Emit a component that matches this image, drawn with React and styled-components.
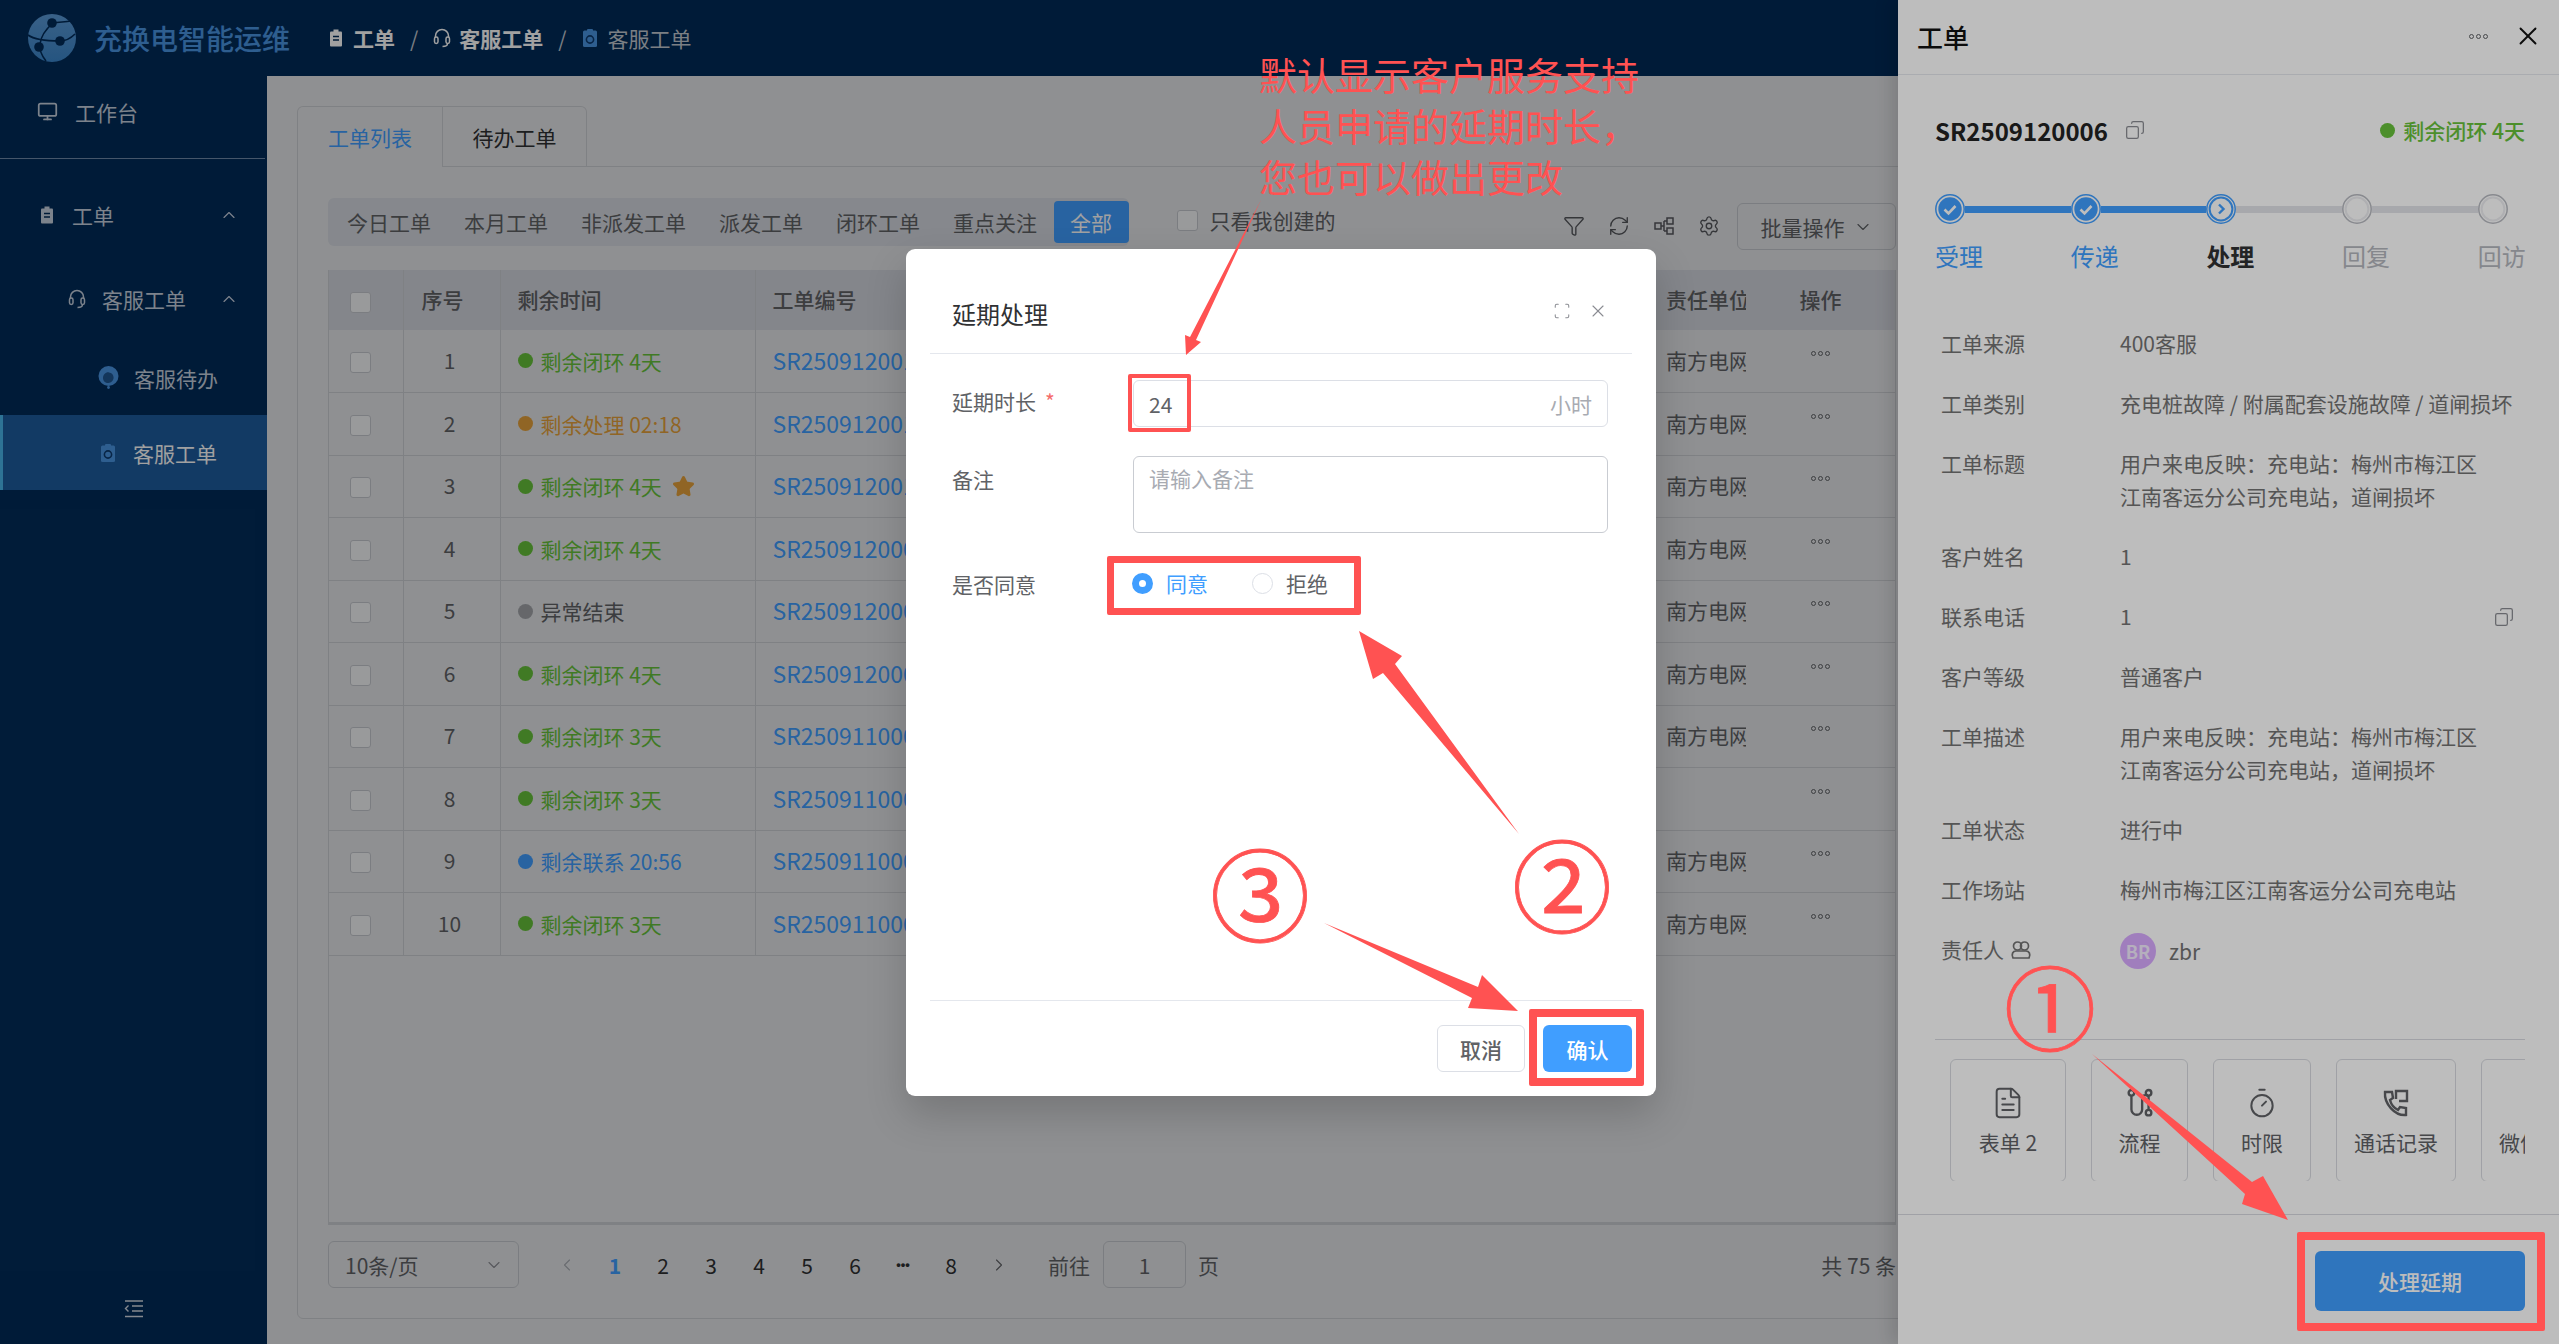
import React from 'react';
import styled, { createGlobalStyle } from 'styled-components';
import {
  Monitor, ChevronUp, ChevronDown, ChevronLeft, ChevronRight, Filter, RefreshCw,
  Settings, X, Scan, Copy, FileText, Timer, Star,
} from 'lucide-react';

const FONT = '"Noto Sans CJK SC", "Noto Sans", sans-serif';
const RED = '#ff5252';
const BLUE = '#409eff';

const GlobalStyle = createGlobalStyle`
  html, body { margin: 0; padding: 0; }
  body { font-family: ${FONT}; background: #e4e6e9; }
  * { box-sizing: border-box; }
`;

const Page = styled.div`
  position: relative;
  width: 2559px;
  height: 1344px;
  overflow: hidden;
  display: flex;
  flex-direction: column;
  font-size: 21px;
  color: #606266;
  background: #e4e6e9;
`;

/* ---------- top bar ---------- */
const TopBar = styled.header`
  height: 76px;
  flex: none;
  display: flex;
  align-items: center;
  background: #022c5a;
  padding-left: 27px;
`;
const Brand = styled.div`
  font-size: 28px;
  font-weight: 500;
  color: #4b96e4;
  margin-left: 17px;
  width: 232px;
  white-space: nowrap;
`;
const Crumb = styled.span`
  display: inline-flex;
  align-items: center;
  gap: 7px;
  font-weight: ${p => (p.$last ? 400 : 700)};
  color: ${p => (p.$last ? '#c4cad2' : '#ffffff')};
`;
const CrumbSep = styled.span`
  color: #c4cad2;
  margin: 0 14px 0 15px;
`;

/* ---------- side menu ---------- */
const Layout = styled.div`
  flex: 1;
  display: flex;
  min-height: 0;
`;
const Side = styled.aside`
  width: 267px;
  flex: none;
  background: #022c5a;
  display: flex;
  flex-direction: column;
  color: #c6d0de;
`;
const SideHome = styled.div`
  height: 83px;
  width: 265px;
  display: flex;
  align-items: center;
  gap: 17px;
  padding: 0 0 11px 37px;
  border-bottom: 1.5px solid #6f89a8;
  margin-bottom: 18px;
`;
const SideItem = styled.div`
  height: 75px;
  flex: none;
  display: flex;
  align-items: center;
  gap: 15px;
  padding-left: ${p => p.$indent}px;
  padding-right: 28px;
  margin-bottom: ${p => p.$after || 0}px;
  color: ${p => (p.$active ? '#ffffff' : '#c6d0de')};
  background: ${p => (p.$active ? '#1e5d9f' : 'transparent')};
  box-shadow: ${p => (p.$active ? 'inset 3px 0 0 #49b7ee' : 'none')};
`;
const SideText = styled.span`
  flex: 1;
`;
const SideFoot = styled.div`
  margin-top: auto;
  height: 70px;
  display: flex;
  align-items: center;
  justify-content: center;
`;

/* ---------- main area ---------- */
const Main = styled.main`
  flex: 1;
  min-width: 0;
  padding: 30px 632px 25px 30px;
  display: flex;
  flex-direction: column;
`;
const Tabs = styled.div`
  display: flex;
  height: 60px;
  flex: none;
`;
const Tab = styled.div`
  display: flex;
  align-items: center;
  justify-content: center;
  width: ${p => p.$w}px;
  height: 61px;
  border: 1.5px solid #cbcdd2;
  border-left-width: ${p => (p.$active ? '1.5px' : '0')};
  border-bottom: ${p => (p.$active ? 'none' : '1.5px solid #cbcdd2')};
  border-radius: ${p => (p.$active ? '6px 0 0 0' : '0 6px 0 0')};
  background: #e4e6e9;
  color: ${p => (p.$active ? BLUE : '#303133')};
  position: relative;
  z-index: 1;
`;
const Panel = styled.section`
  flex: 1;
  min-height: 0;
  border: 1.5px solid #cbcdd2;
  border-radius: 0 6px 6px 6px;
  padding: 31px 30px 30px 30px;
  display: flex;
  flex-direction: column;
`;
const ToolRow = styled.div`
  height: 72px;
  flex: none;
  display: flex;
  align-items: flex-start;
`;
const FilterBar = styled.div`
  height: 48px;
  display: flex;
  align-items: center;
  padding: 3px 0 3px 2.5px;
  background: #d5d9e0;
  border-radius: 6px;
`;
const FilterItem = styled.div`
  height: 42px;
  display: flex;
  align-items: center;
  padding: 0 16.5px;
  border-radius: 4px;
  color: ${p => (p.$active ? '#ffffff' : '#606266')};
  background: ${p => (p.$active ? BLUE : 'transparent')};
`;
const CheckLabel = styled.label`
  display: flex;
  align-items: center;
  gap: 12px;
  height: 44px;
  margin-left: 48px;
  color: #606266;
`;
const Check = styled.span`
  display: inline-block;
  vertical-align: middle;
  width: 21px;
  height: 21px;
  background: #f4f5f7;
  border: 1.5px solid #c4c7cd;
  border-radius: 3px;
`;
const ToolIcons = styled.div`
  margin-left: auto;
  display: flex;
  height: 56px;
  align-items: center;
  color: #55575c;
`;
const ToolIcon = styled.span`
  width: 45px;
  display: flex;
  justify-content: center;
`;
const BatchButton = styled.div`
  width: 159px;
  height: 47px;
  margin-top: 5px;
  margin-left: 6px;
  display: flex;
  align-items: center;
  justify-content: center;
  gap: 8px;
  border: 1.5px solid #c4c7cd;
  border-radius: 6px;
`;

/* ---------- table ---------- */
const TableWrap = styled.div`
  flex: 1;
  min-height: 0;
  border: solid #cbcdd2;
  border-width: 0 1.5px 3px 1.5px;
  overflow: hidden;
`;
const Table = styled.table`
  width: 100%;
  table-layout: fixed;
  border-collapse: collapse;
`;
const Th = styled.th`
  height: 60px;
  padding: ${p => p.$pad || '0 0 2px 17px'};
  font-weight: 500;
  font-size: 21px;
  text-align: ${p => p.$align || 'left'};
  color: #606266;
  background: #d3d5dd;
  border-right: ${p => (p.$noline ? 'none' : '1.5px solid #cbcdd2')};
  white-space: nowrap;
  overflow: hidden;
  box-shadow: ${p => (p.$fixed ? '-6px 0 8px rgba(0,0,0,.06)' : 'none')};
  position: relative;
`;
const Td = styled.td`
  height: 62.5px;
  padding: ${p => p.$pad || '0 0 2px 17px'};
  text-align: ${p => p.$align || 'left'};
  border-bottom: 1.5px solid #cbcdd2;
  border-right: ${p => (p.$noline ? 'none' : '1.5px solid #cbcdd2')};
  white-space: nowrap;
  overflow: hidden;
  font-size: ${p => p.$size || 21}px;
  color: ${p => p.$color || '#606266'};
  box-shadow: ${p => (p.$fixed ? '-6px 0 8px rgba(0,0,0,.06)' : 'none')};
  position: relative;
`;
const Remain = styled.span`
  display: inline-flex;
  align-items: center;
  gap: 8px;
  color: ${p => p.$color};
  font-weight: ${p => (p.$bold ? 500 : 400)};
`;
const Dot = styled.i`
  width: 15px;
  height: 15px;
  border-radius: 50%;
  background: ${p => p.$color};
`;
const Dots = styled.span`
  display: inline-flex;
  gap: 2px;
`;
const DotRing = styled.i`
  width: 5px;
  height: 5px;
  border: 1.2px solid currentColor;
  border-radius: 50%;
`;

/* ---------- pagination ---------- */
const Pager = styled.div`
  height: 47px;
  margin-top: 16px;
  flex: none;
  display: flex;
  align-items: center;
`;
const Select = styled.div`
  width: 191px;
  height: 47px;
  display: flex;
  align-items: center;
  justify-content: space-between;
  padding: 0 14px 0 16px;
  border: 1.5px solid #c4c7cd;
  border-radius: 6px;
`;
const Pages = styled.div`
  display: flex;
  margin-left: 24px;
  margin-right: 25px;
`;
const PageNum = styled.span`
  width: 48px;
  display: flex;
  justify-content: center;
  align-items: center;
  color: ${p => (p.$active ? BLUE : '#303133')};
  font-weight: ${p => (p.$active ? 700 : 400)};
`;
const PageMore = styled(PageNum)`
  font-family: "Liberation Sans", sans-serif;
  font-size: 13px;
  letter-spacing: 0;
  font-weight: 700;
`;
const PageInput = styled.div`
  width: 83px;
  height: 47px;
  margin: 0 12px 0 13px;
  display: flex;
  align-items: center;
  justify-content: center;
  border: 1.5px solid #c4c7cd;
  border-radius: 6px;
`;
const Total = styled.span`
  margin-left: auto;
`;

/* ---------- overlays ---------- */
const ShadeBack = styled.div`
  position: absolute;
  inset: 0;
  background: rgba(0, 0, 0, 0.15);
  z-index: 10;
`;
const ShadeFront = styled.div`
  position: absolute;
  inset: 0;
  background: rgba(0, 0, 0, 0.26);
  z-index: 12;
`;

/* ---------- drawer ---------- */
const Drawer = styled.aside`
  position: absolute;
  z-index: 11;
  top: 0;
  right: 0;
  bottom: 0;
  width: 661px;
  background: #ffffff;
  display: flex;
  flex-direction: column;
  box-shadow: -8px 0 16px rgba(0, 0, 0, 0.12);
`;
const DrawerHead = styled.div`
  height: 75px;
  flex: none;
  display: flex;
  align-items: center;
  padding: 0 16px 2px 19px;
  border-bottom: 1.5px solid #e6e8ee;
  color: #111;
`;
const DrawerTitle = styled.div`
  font-size: 26px;
  font-weight: 500;
  flex: 1;
`;
const HeadDots = styled(Dots)`
  color: #606266;
  margin-right: 25px;
`;
const DrawerBody = styled.div`
  flex: 1;
  min-height: 0;
  padding: 37px 34px 0 37px;
  display: flex;
  flex-direction: column;
`;
const TicketRow = styled.div`
  height: 36px;
  flex: none;
  display: flex;
  align-items: center;
`;
const TicketNo = styled.span`
  font-size: 24px;
  font-weight: 700;
  color: #222;
  margin-right: 17px;
`;
const Spacer = styled.span`
  flex: 1;
`;
const Steps = styled.div`
  display: flex;
  margin-top: 46px;
  flex: none;
`;
const Step = styled.div`
  width: ${p => (p.$last ? 'auto' : '135.7px')};
  flex: none;
`;
const StepHead = styled.div`
  display: flex;
  align-items: center;
`;
const StepLine = styled.div`
  flex: 1;
  height: 7px;
  background: ${p => (p.$on ? BLUE : '#e2e3e8')};
`;
const StepLabel = styled.div`
  font-size: 24px;
  line-height: 36px;
  margin-top: 14px;
  font-weight: ${p => (p.$state === 'now' ? 700 : 400)};
  color: ${p => (p.$state === 'now' ? '#303133' : p.$state === 'done' ? BLUE : '#b4b6bd')};
`;
const InfoList = styled.div`
  margin-top: 53px;
  padding-left: 6px;
  flex: 1;
  min-height: 0;
`;
const InfoRow = styled.div`
  display: flex;
  line-height: 33px;
  margin-bottom: 27px;
  color: #737373;
`;
const InfoLabel = styled.div`
  width: 179px;
  flex: none;
  display: flex;
  align-items: center;
  gap: 6px;
  height: 33px;
`;
const InfoValue = styled.div`
  flex: 1;
  display: flex;
  align-items: center;
  justify-content: ${p => (p.$start ? 'flex-start' : 'space-between')};
  padding-right: 11px;
`;
const Avatar = styled.span`
  width: 36px;
  height: 36px;
  border-radius: 50%;
  background: #d8aaff;
  color: #f4ecff;
  font-size: 18px;
  font-weight: 700;
  display: inline-flex;
  align-items: center;
  justify-content: center;
  margin-right: 13px;
`;
const Cards = styled.div`
  flex: none;
  height: 142px;
  padding: 19px 0 0 15px;
  border-top: 1.5px solid #d8dae0;
  margin-bottom: 33px;
  display: flex;
  gap: 25px;
  overflow: hidden;
`;
const ToolCard = styled.div`
  width: ${p => p.$w}px;
  height: 123px;
  flex: none;
  display: flex;
  flex-direction: column;
  align-items: center;
  padding-top: 26px;
  border: 1.5px solid #d8dae0;
  border-radius: 6px;
  color: #606266;
  white-space: nowrap;
`;
const CardIcon = styled.div`
  height: 34px;
  display: flex;
  align-items: center;
  justify-content: center;
`;
const CardText = styled.div`
  margin-top: 7px;
  line-height: 30px;
`;
const DrawerFoot = styled.div`
  height: 130px;
  flex: none;
  border-top: 1.5px solid #d8dae0;
  padding: 36px 34px 0 0;
  display: flex;
  justify-content: flex-end;
  align-items: flex-start;
`;
const PrimaryButton = styled.div`
  width: ${p => p.$w}px;
  height: ${p => p.$h}px;
  background: ${BLUE};
  color: #ffffff;
  font-weight: 500;
  border-radius: 6px;
  display: flex;
  align-items: center;
  justify-content: center;
`;

/* ---------- dialog ---------- */
const Dialog = styled.div`
  position: absolute;
  z-index: 13;
  left: 906px;
  top: 249px;
  width: 750px;
  height: 847px;
  background: #ffffff;
  border-radius: 9px;
  padding: 0 24px;
  display: flex;
  flex-direction: column;
  box-shadow: 0 18px 40px rgba(0, 0, 0, 0.18);
`;
const DialogHead = styled.div`
  height: 105px;
  flex: none;
  display: flex;
  align-items: center;
  padding: 24px 24px 0 22px;
  border-bottom: 1.5px solid #e4e7ed;
  color: #303133;
`;
const DialogTitle = styled.div`
  flex: 1;
  font-size: 24px;
`;
const DialogClose = styled.div`
  display: flex;
  align-items: center;
  gap: 17px;
  color: #8a8c92;
  margin-top: -4px;
`;
const DialogForm = styled.div`
  flex: 1;
  padding: 26px 24px 0 22px;
`;
const FormRow = styled.div`
  display: flex;
  margin-bottom: ${p => p.$after || 0}px;
`;
const FormLabel = styled.div`
  width: 181px;
  flex: none;
  padding-top: ${p => p.$top || 6}px;
  color: #606266;
`;
const Required = styled.span`
  color: #f56c6c;
  margin-left: 9px;
`;
const TextInput = styled.div`
  flex: 1;
  height: ${p => p.$h}px;
  display: flex;
  justify-content: space-between;
  padding: ${p => p.$pad || '5px 15px'};
  line-height: 36px;
  border: 1.5px solid ${p => (p.$strong ? '#c9ccd2' : '#dcdfe6')};
  border-radius: 6px;
  color: #606266;
`;
const Hint = styled.span`
  color: #a8abb2;
`;
const Radios = styled.div`
  display: flex;
  align-items: center;
  height: 32px;
  margin-top: 12px;
  margin-left: -1px;
`;
const RadioDot = styled.i`
  width: 21px;
  height: 21px;
  border-radius: 50%;
  border: ${p => (p.$on ? `7px solid ${BLUE}` : '1.5px solid #dcdfe6')};
  background: #fff;
  margin-right: 13px;
`;
const RadioText = styled.span`
  color: ${p => (p.$on ? BLUE : '#606266')};
  margin-right: ${p => p.$after || 0}px;
`;
const DialogFoot = styled.div`
  height: 96px;
  flex: none;
  border-top: 1.5px solid #e4e7ed;
  padding-top: 24px;
  display: flex;
  justify-content: flex-end;
  gap: 18px;
`;
const PlainButton = styled.div`
  width: 88px;
  height: 47px;
  border: 1.5px solid #dcdfe6;
  border-radius: 6px;
  color: #606266;
  font-weight: 500;
  display: flex;
  align-items: center;
  justify-content: center;
`;

/* ---------- red annotations drawn on the screenshot ---------- */
const Marks = styled.div`
  position: absolute;
  inset: 0;
  z-index: 14;
  pointer-events: none;
`;
const MarkBox = styled.div`
  position: absolute;
  left: ${p => p.$x}px;
  top: ${p => p.$y}px;
  width: ${p => p.$w}px;
  height: ${p => p.$h}px;
  border: ${p => p.$b}px solid ${RED};
  border-radius: 2px;
`;
const MarkNote = styled.div`
  position: absolute;
  left: 1259px;
  top: 48px;
  font-size: 38px;
  line-height: 51px;
  color: ${RED};
  white-space: pre;
`;
const MarkNumber = styled.div`
  position: absolute;
  left: ${p => p.$x}px;
  top: ${p => p.$y}px;
  transform: translate(-50%, -50%);
  font-size: ${p => p.$size}px;
  line-height: 1;
  color: ${RED};
  -webkit-text-stroke: 0.8px ${RED};
`;
const MarkArrows = styled.svg`
  position: absolute;
  inset: 0;
`;

const ClipboardMark = ({ size = 20, color }) => (
  <svg width={size} height={size} viewBox="0 0 20 20">
    <rect x="3" y="2.5" width="14" height="16.5" rx="1.5" fill={color} />
    <rect x="7" y="1" width="6" height="3.2" rx="1" fill={color} />
    <circle cx="10" cy="11.5" r="3.6" fill="none" stroke="#0d3b70" strokeWidth="1.6" />
  </svg>
);

const OrderIcon = ({ size = 20 }) => (
  <svg width={size} height={size} viewBox="0 0 20 20" fill="none" stroke="currentColor">
    <rect x="4" y="3.5" width="12" height="15" rx="1" fill="currentColor" stroke="none" />
    <rect x="7.5" y="1.5" width="5" height="3" fill="currentColor" stroke="none" />
    <path d="M7 8.5h6M7 12h6" stroke="#022c5a" strokeWidth="1.6" />
  </svg>
);

const HeadsetIcon = () => (
  <svg width="20" height="20" viewBox="0 0 20 20" fill="none" stroke="currentColor" strokeWidth="1.5">
    <path d="M3.5 9.5V8a6.5 6.5 0 0 1 13 0v1.5" />
    <rect x="2.5" y="9" width="3.5" height="6.5" rx="1.7" />
    <rect x="14" y="9" width="3.5" height="6.5" rx="1.7" />
    <path d="M15.5 15.5c0 2-2 3-5 3" />
  </svg>
);

const Logo = () => (
  <svg width="50" height="48" viewBox="0 0 50 48">
    <defs>
      <linearGradient id="logoFill" x1="0" y1="0" x2="0" y2="1">
        <stop offset="0" stopColor="#5c9bd8" />
        <stop offset="1" stopColor="#3c87cc" />
      </linearGradient>
    </defs>
    <circle cx="25" cy="24" r="24" fill="url(#logoFill)" />
    <g fill="none" stroke="#022c5a" strokeWidth="1.6">
      <path d="M1 21c8 6 24 6 32 6 6 0 11-3 15-7" />
      <path d="M26 9c-7 6-12 13-13 21-1 6 2 12 6 17" />
      <path d="M26 9c6-1 12-1 18-2" />
    </g>
    <circle cx="25" cy="9" r="4.8" fill="#022c5a" />
    <circle cx="33" cy="27" r="4.8" fill="#022c5a" />
    <circle cx="12" cy="33" r="4.8" fill="#022c5a" />
  </svg>
);

const AgentIcon = () => (
  <svg width="21" height="23" viewBox="0 0 21 23">
    <circle cx="10.5" cy="10" r="10" fill="#4b96e4" />
    <path d="M5 12c0-3.4 2.6-6 6-5.6 2.6.3 4.6 2.2 4.6 5.2 0 3-2.4 5.4-5.3 5.4S5 15 5 12z" fill="#022c5a" opacity=".6" />
    <circle cx="10.5" cy="21.5" r="1.4" fill="#4b96e4" />
  </svg>
);

const CollapseIcon = () => (
  <svg width="20" height="20" viewBox="0 0 20 20" fill="none" stroke="#d4dae4" strokeWidth="1.6">
    <path d="M1 2h18M8 7h11M8 12h11M1 17.5h18" />
    <path d="M4.5 6.5L1.5 9.5l3 3" strokeWidth="1.4" />
  </svg>
);

const FlowIcon = () => (
  <svg width="30" height="30" viewBox="0 0 28 28" fill="none" stroke="currentColor" strokeWidth="2.2">
    <circle cx="6" cy="4.5" r="2.6" />
    <circle cx="22" cy="23" r="2.6" />
    <circle cx="22" cy="4.5" r="2.6" />
    <path d="M6 7v13a5 5 0 0 0 10 0V8a4 4 0 0 1 6 0v12" />
  </svg>
);

const PhoneLogIcon = () => (
  <svg width="28" height="28" viewBox="0 0 28 28" fill="none" stroke="currentColor" strokeWidth="2.4">
    <path d="M3 3h7l1 6-3 2c1 4 4 8 8 10l2-3 6 1v7c-11 1-22-11-21-23z" />
    <path d="M14 10V2h11v10h-8" />
  </svg>
);

const PeopleIcon = () => (
  <svg width="22" height="20" viewBox="0 0 22 20" fill="none" stroke="currentColor" strokeWidth="1.7">
    <circle cx="7.5" cy="6" r="4" />
    <circle cx="14.5" cy="6" r="4" />
    <path d="M3 18c-2-4 0-7 3-7h10c3 0 5 3 3 7z" />
  </svg>
);

const StepDot = ({ state }) => {
  const main = state === 'todo' ? '#b8bac1' : BLUE;
  return (
    <svg width="30" height="30" viewBox="0 0 30 30" style={{ flex: 'none' }}>
      <circle cx="15" cy="15" r="14.2" fill="#ffffff" stroke={main} strokeWidth="1.5" />
      {state === 'done' && <circle cx="15" cy="15" r="11.7" fill={BLUE} />}
      {state === 'done' && <path d="M9.5 15.5l4 4 7-7.5" fill="none" stroke="#fff" strokeWidth="2.6" />}
      {state === 'now' && <circle cx="15" cy="15" r="11.4" fill="#fff" stroke={BLUE} strokeWidth="2" />}
      {state === 'now' && <path d="M13 10.5l4.5 4.5-4.5 4.5" fill="none" stroke={BLUE} strokeWidth="2.4" />}
      {state === 'todo' && <circle cx="15" cy="15" r="11.4" fill="#fff" stroke="#ecedf0" strokeWidth="2" />}
    </svg>
  );
};

const CopyIcon = () => <Copy size={20} strokeWidth={1.5} color="#8a8c92" style={{ transform: 'scaleX(-1)' }} />;

const GREEN = '#67c23a';
const ORANGE = '#e6a23c';

const rows = [
  { no: 1, time: '剩余闭环 4天', color: GREEN, sr: 'SR2509120012', org: '南方电网' },
  { no: 2, time: '剩余处理 02:18', color: ORANGE, sr: 'SR2509120011', org: '南方电网' },
  { no: 3, time: '剩余闭环 4天', color: GREEN, sr: 'SR2509120010', org: '南方电网', star: true },
  { no: 4, time: '剩余闭环 4天', color: GREEN, sr: 'SR2509120009', org: '南方电网' },
  { no: 5, time: '异常结束', color: '#a3a5aa', textColor: '#606266', sr: 'SR2509120008', org: '南方电网' },
  { no: 6, time: '剩余闭环 4天', color: GREEN, sr: 'SR2509120006', org: '南方电网' },
  { no: 7, time: '剩余闭环 3天', color: GREEN, sr: 'SR2509110009', org: '南方电网' },
  { no: 8, time: '剩余闭环 3天', color: GREEN, sr: 'SR2509110008', org: '' },
  { no: 9, time: '剩余联系 20:56', color: BLUE, sr: 'SR2509110007', org: '南方电网' },
  { no: 10, time: '剩余闭环 3天', color: GREEN, sr: 'SR2509110006', org: '南方电网' },
];

const info = [
  ['工单来源', ['400客服']],
  ['工单类别', ['充电桩故障 / 附属配套设施故障 / 道闸损坏']],
  ['工单标题', ['用户来电反映：充电站：梅州市梅江区', '江南客运分公司充电站，道闸损坏']],
  ['客户姓名', ['1']],
  ['联系电话', ['1'], true],
  ['客户等级', ['普通客户']],
  ['工单描述', ['用户来电反映：充电站：梅州市梅江区', '江南客运分公司充电站，道闸损坏']],
  ['工单状态', ['进行中']],
  ['工作场站', ['梅州市梅江区江南客运分公司充电站']],
];

const steps = [
  ['受理', 'done'],
  ['传递', 'done'],
  ['处理', 'now'],
  ['回复', 'todo'],
  ['回访', 'todo'],
];

const filters = ['今日工单', '本月工单', '非派发工单', '派发工单', '闭环工单', '重点关注'];

const App = () => (
  <Page>
    <GlobalStyle />
    <TopBar>
      <Logo />
      <Brand>充换电智能运维</Brand>
      <Crumb><OrderIcon /> 工单</Crumb>
      <CrumbSep>/</CrumbSep>
      <Crumb><HeadsetIcon /> 客服工单</Crumb>
      <CrumbSep>/</CrumbSep>
      <Crumb $last><ClipboardMark color="#4b96e4" /> 客服工单</Crumb>
    </TopBar>

    <Layout>
      <Side>
        <SideHome><Monitor size={21} /> 工作台</SideHome>
        <SideItem $indent={37} $after={9}>
          <OrderIcon /><SideText>工单</SideText><ChevronUp size={20} strokeWidth={1.4} />
        </SideItem>
        <SideItem $indent={67} $after={4}>
          <HeadsetIcon /><SideText>客服工单</SideText><ChevronUp size={20} strokeWidth={1.4} />
        </SideItem>
        <SideItem $indent={98}><AgentIcon /><SideText>客服待办</SideText></SideItem>
        <SideItem $indent={98} $active><ClipboardMark color="#4b96e4" /><SideText>客服工单</SideText></SideItem>
        <SideFoot><CollapseIcon /></SideFoot>
      </Side>

      <Main>
        <Tabs>
          <Tab $w={146} $active>工单列表</Tab>
          <Tab $w={144}>待办工单</Tab>
        </Tabs>
        <Panel>
          <ToolRow>
            <FilterBar>
              {filters.map(f => <FilterItem key={f}>{f}</FilterItem>)}
              <FilterItem $active>全部</FilterItem>
            </FilterBar>
            <CheckLabel><Check /> 只看我创建的</CheckLabel>
            <ToolIcons>
              <ToolIcon><Filter size={22} strokeWidth={1.5} /></ToolIcon>
              <ToolIcon><RefreshCw size={22} strokeWidth={1.5} /></ToolIcon>
              <ToolIcon>
                <svg width="22" height="22" viewBox="0 0 22 22" fill="none" stroke="currentColor" strokeWidth="1.5">
                  <rect x="2" y="8" width="6" height="6" />
                  <rect x="14" y="3" width="6" height="6" />
                  <rect x="14" y="13" width="6" height="6" />
                  <path d="M8 11h3M11 6v10M11 6h3M11 16h3" />
                </svg>
              </ToolIcon>
              <ToolIcon><Settings size={22} strokeWidth={1.5} /></ToolIcon>
            </ToolIcons>
            <BatchButton>批量操作 <ChevronDown size={20} strokeWidth={1.4} /></BatchButton>
          </ToolRow>

          <TableWrap>
            <Table>
              <colgroup>
                <col style={{ width: 74 }} />
                <col style={{ width: 97 }} />
                <col style={{ width: 255 }} />
                <col />
                <col style={{ width: 97 }} />
                <col style={{ width: 149 }} />
              </colgroup>
              <thead>
                <tr>
                  <Th $pad="0 0 2px 21px"><Check /></Th>
                  <Th $pad="0 0 2px 18px">序号</Th>
                  <Th>剩余时间</Th>
                  <Th $noline>工单编号</Th>
                  <Th $noline>责任单位</Th>
                  <Th $align="center" $pad="0 0 2px 0" $noline $fixed>操作</Th>
                </tr>
              </thead>
              <tbody>
                {rows.map(r => (
                  <tr key={r.no}>
                    <Td $pad="0 0 4px 21px"><Check /></Td>
                    <Td $align="center" $pad="0 4px 2px 0">{r.no}</Td>
                    <Td>
                      <Remain $color={r.textColor || r.color}>
                        <Dot $color={r.color} />{r.time}
                        {r.star && <Star size={23} fill={ORANGE} color={ORANGE} style={{ marginLeft: 2 }} />}
                      </Remain>
                    </Td>
                    <Td $noline $color={BLUE} $size={23}>{r.sr}</Td>
                    <Td $noline>{r.org}</Td>
                    <Td $align="center" $pad="0 0 28px 0" $noline $fixed>
                      <Dots><DotRing /><DotRing /><DotRing /></Dots>
                    </Td>
                  </tr>
                ))}
              </tbody>
            </Table>
          </TableWrap>

          <Pager>
            <Select>10条/页 <ChevronDown size={20} strokeWidth={1.3} color="#8a8c92" /></Select>
            <Pages>
              <PageNum><ChevronLeft size={20} strokeWidth={1.3} color="#a8abb2" /></PageNum>
              <PageNum $active>1</PageNum>
              <PageNum>2</PageNum>
              <PageNum>3</PageNum>
              <PageNum>4</PageNum>
              <PageNum>5</PageNum>
              <PageNum>6</PageNum>
              <PageMore>•••</PageMore>
              <PageNum>8</PageNum>
              <PageNum><ChevronRight size={20} strokeWidth={1.3} color="#606266" /></PageNum>
            </Pages>
            前往
            <PageInput>1</PageInput>
            页
            <Total>共 75 条</Total>
          </Pager>
        </Panel>
      </Main>
    </Layout>

    <ShadeBack />

    <Drawer>
      <DrawerHead>
        <DrawerTitle>工单</DrawerTitle>
        <HeadDots><DotRing /><DotRing /><DotRing /></HeadDots>
        <X size={30} strokeWidth={1.5} />
      </DrawerHead>
      <DrawerBody>
        <TicketRow>
          <TicketNo>SR2509120006</TicketNo>
          <CopyIcon />
          <Spacer />
          <Remain $color={GREEN} $bold><Dot $color={GREEN} />剩余闭环 4天</Remain>
        </TicketRow>
        <Steps>
          {steps.map(([label, state], i) => (
            <Step key={label} $last={i === 4}>
              <StepHead>
                <StepDot state={state} />
                {i < 4 && <StepLine $on={i < 2} />}
              </StepHead>
              <StepLabel $state={state}>{label}</StepLabel>
            </Step>
          ))}
        </Steps>
        <InfoList>
          {info.map(([label, lines, copy]) => (
            <InfoRow key={label}>
              <InfoLabel>{label}</InfoLabel>
              <InfoValue>
                <div>{lines.map(l => <div key={l}>{l}</div>)}</div>
                {copy && <CopyIcon />}
              </InfoValue>
            </InfoRow>
          ))}
          <InfoRow>
            <InfoLabel>责任人 <PeopleIcon /></InfoLabel>
            <InfoValue $start><Avatar>BR</Avatar>zbr</InfoValue>
          </InfoRow>
        </InfoList>
        <Cards>
          <ToolCard $w={116}><CardIcon><FileText size={34} strokeWidth={1.4} /></CardIcon><CardText>表单 2</CardText></ToolCard>
          <ToolCard $w={97}><CardIcon><FlowIcon /></CardIcon><CardText>流程</CardText></ToolCard>
          <ToolCard $w={98}><CardIcon><Timer size={32} strokeWidth={1.5} /></CardIcon><CardText>时限</CardText></ToolCard>
          <ToolCard $w={120}><CardIcon><PhoneLogIcon /></CardIcon><CardText>通话记录</CardText></ToolCard>
          <ToolCard $w={120}><CardIcon /><CardText>微信记录</CardText></ToolCard>
        </Cards>
      </DrawerBody>
      <DrawerFoot><PrimaryButton $w={210} $h={60}>处理延期</PrimaryButton></DrawerFoot>
    </Drawer>

    <ShadeFront />

    <Dialog>
      <DialogHead>
        <DialogTitle>延期处理</DialogTitle>
        <DialogClose>
          <Scan size={18} strokeWidth={1.4} />
          <X size={20} strokeWidth={1.3} />
        </DialogClose>
      </DialogHead>
      <DialogForm>
        <FormRow $after={29}>
          <FormLabel>延期时长<Required>*</Required></FormLabel>
          <TextInput $h={47}><span>24</span><Hint>小时</Hint></TextInput>
        </FormRow>
        <FormRow $after={22}>
          <FormLabel $top={8}>备注</FormLabel>
          <TextInput $h={77} $pad="3px 15px" $strong><Hint>请输入备注</Hint></TextInput>
        </FormRow>
        <FormRow>
          <FormLabel $top={14}>是否同意</FormLabel>
          <Radios>
            <RadioDot $on />
            <RadioText $on $after={44}>同意</RadioText>
            <RadioDot />
            <RadioText>拒绝</RadioText>
          </Radios>
        </FormRow>
      </DialogForm>
      <DialogFoot>
        <PlainButton>取消</PlainButton>
        <PrimaryButton $w={89} $h={47}>确认</PrimaryButton>
      </DialogFoot>
    </Dialog>

    <Marks>
      <MarkNote>{'默认显示客户服务支持\n人员申请的延期时长，\n您也可以做出更改'}</MarkNote>
      <MarkBox $x={1128} $y={374} $w={63} $h={58} $b={4} />
      <MarkBox $x={1107} $y={556} $w={254} $h={59} $b={7} />
      <MarkBox $x={1529} $y={1009} $w={115} $h={77} $b={8} />
      <MarkBox $x={2297} $y={1232} $w={248} $h={99} $b={8} />
      <MarkNumber $x={2050} $y={1004} $size={92}>①</MarkNumber>
      <MarkNumber $x={1562} $y={882} $size={100}>②</MarkNumber>
      <MarkNumber $x={1260} $y={891} $size={100}>③</MarkNumber>
      <MarkArrows width="2559" height="1344" viewBox="0 0 2559 1344">
        <g fill={RED}>
          <polygon points="1261,200 1196,340 1201,342 1186,355 1185,335 1190,337" />
          <polygon points="1519,834 1395,664 1402,656 1359,631 1373,679 1383,673" />
          <polygon points="1324,923 1478,987 1482,975 1518,1011 1468,1008 1472,998" />
          <polygon points="2092,1054 2252,1182 2263,1176 2288,1220 2242,1204 2245,1194" />
        </g>
      </MarkArrows>
    </Marks>
  </Page>
);

export default App;
